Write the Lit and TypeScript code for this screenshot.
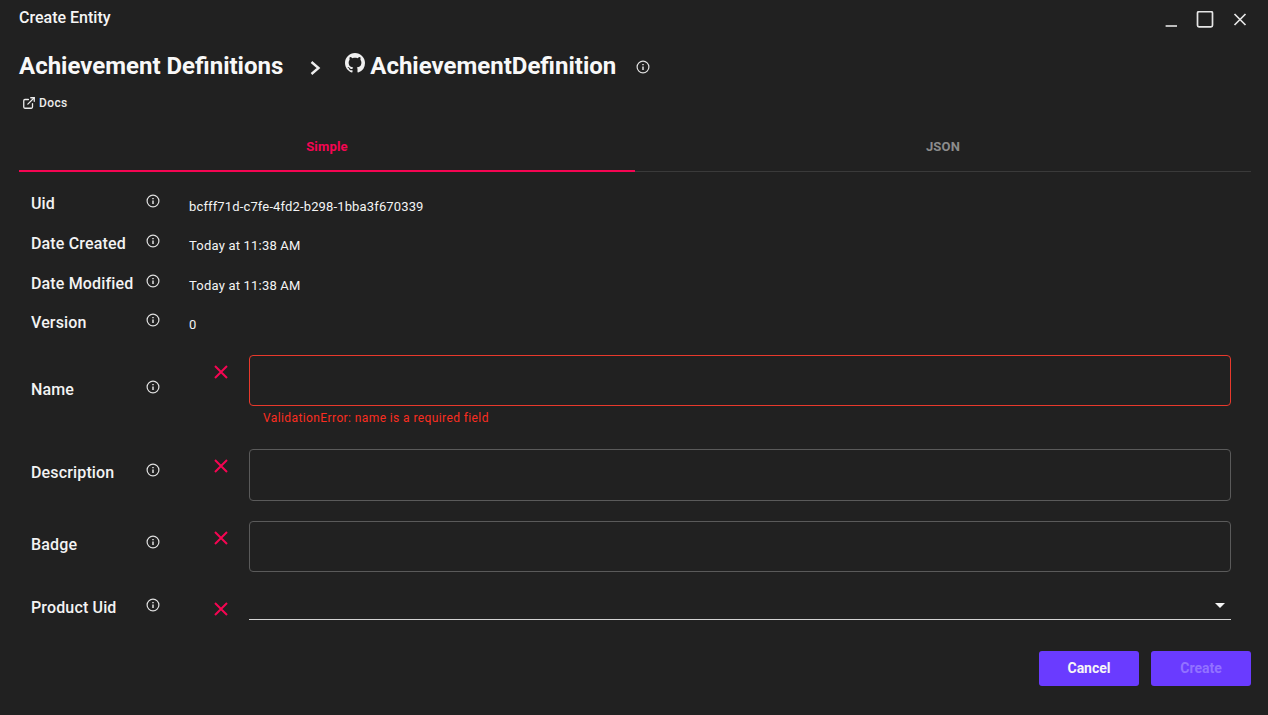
import { LitElement, html, css, svg } from "lit";
import { customElement } from "lit/decorators.js";

const infoIcon = html`<svg class="info" viewBox="0 0 14 14" fill="none" stroke="currentColor" stroke-width="1.2"><circle cx="7" cy="7" r="5.9"/><line x1="7" y1="6.4" x2="7" y2="10" stroke-width="1.5"/><line x1="7" y1="3.9" x2="7" y2="5.2" stroke-width="1.5"/></svg>`;
const crossIcon = html`<svg class="cross" viewBox="0 0 14 14" fill="none" stroke="currentColor" stroke-width="2"><path d="M1 1l12 12M13 1L1 13"/></svg>`;
const ghPath = svg`<path fill-rule="evenodd" d="M8 0C3.58 0 0 3.58 0 8c0 3.54 2.29 6.53 5.47 7.59.4.07.55-.17.55-.38 0-.19-.01-.82-.01-1.49-2.01.37-2.53-.49-2.69-.94-.09-.23-.48-.94-.82-1.13-.28-.15-.68-.52-.01-.53.63-.01 1.08.58 1.23.82.72 1.21 1.87.87 2.33.66.07-.52.28-.87.51-1.07-1.78-.2-3.64-.89-3.64-3.95 0-.87.31-1.59.82-2.15-.08-.2-.36-1.02.08-2.12 0 0 .67-.21 2.2.82.64-.18 1.32-.27 2-.27.68 0 1.36.09 2 .27 1.53-1.04 2.2-.82 2.2-.82.44 1.1.16 1.92.08 2.12.51.56.82 1.27.82 2.15 0 3.07-1.87 3.75-3.65 3.95.29.25.54.73.54 1.48 0 1.07-.01 1.93-.01 2.2 0 .21.15.46.55.38A8.013 8.013 0 0016 8c0-4.42-3.58-8-8-8z"/>`;

@customElement("app-root")
export class AppRoot extends LitElement {
  static styles = css`
    :host { display: block; height: 715px; overflow: hidden; background: #212121; color: #f5f5f5; font-family: Roboto, "Liberation Sans", sans-serif; }
    .page { display: flex; flex-direction: column; height: 715px; padding: 0 17px 0 19px; box-sizing: border-box; }
    .titlebar { display: flex; align-items: flex-start; justify-content: space-between; height: 46px; }
    .title { font-size: 16px; font-weight: 500; line-height: 18px; margin-top: 9px; }
    .winctl { display: flex; align-items: flex-start; color: #e6e6e6; margin-top: 11px; }
    .winctl svg { display: block; }
    .min { width: 14px; height: 16px; margin-right: 19px; }
    .max { width: 18px; height: 17px; margin-right: 19px; }
    .close { width: 14px; height: 14px; margin: 2px 4px 0 0; }
    .heading { display: flex; align-items: center; height: 40px; font-size: 24px; font-weight: 700; line-height: 40px; color: #f8f8f8; }
    .chev { width: 13px; height: 18px; margin: 4px 23px 0 26px; color: #eee; }
    .gh { width: 20px; height: 20px; margin: -6px 5px 0 0; color: #f0f0f0; fill: currentColor; }
    .heading .info { margin: 2px 0 0 20px; }
    .docs { display: flex; align-items: center; height: 16px; margin: 9px 0 0 3px; font-size: 12px; font-weight: 500; color: #ececec; letter-spacing: .4px; }
    .docs svg { width: 14px; height: 14px; margin-right: 3px; }
    .tabs { display: grid; grid-template-columns: 1fr 1fr; height: 52px; margin-top: 9px; border-bottom: 1px solid #3a3a3a; box-sizing: border-box; }
    .tab { display: flex; align-items: center; justify-content: center; font-size: 13px; font-weight: 700; color: #8c8c8c; box-sizing: border-box; height: 52px; letter-spacing: .2px; }
    .tab.active { color: #f50552; border-bottom: 2px solid #f50552; padding-top: 2px; }
    .form { padding: 22px 20px 0 12px; }
    .info { width: 14px; height: 14px; flex: none; color: #e0e0e0; display: block; }
    .label { width: 115px; flex: none; font-size: 16px; font-weight: 500; line-height: 20px; color: #f3f3f3; letter-spacing: .15px; }
    .read { display: flex; align-items: flex-start; height: 40px; }
    .read.short { height: 39px; }
    .value { margin: 2px 0 0 29px; font-size: 13px; line-height: 20px; color: #f4f4f4; letter-spacing: .2px; }
    .read:first-child .value { margin-top: 3px; letter-spacing: .14px; }
    .edit { display: flex; align-items: flex-start; }
    .edit .cross { margin-top: 10px; }
    .cross { width: 14px; height: 14px; flex: none; color: #f50552; margin-left: 54px; margin-right: 21px; }
    .control { flex: 1; min-width: 0; }
    .box { height: 51px; box-sizing: border-box; border: 1px solid #5a5a5a; border-radius: 4px; }
    .box.tall { height: 52px; }
    .box.err { border-color: #e8392c; }
    .error { font-size: 12px; line-height: 14px; color: #fb2d20; margin: 5px 0 0 14px; letter-spacing: .4px; height: 24px; }
    .name { height: 94px; margin-top: 2px; }
    .name .label { margin-top: 25px; } .name .info { margin-top: 25px; }
    .desc { height: 72px; }
    .desc .label { margin-top: 14px; } .desc .info { margin-top: 14px; }
    .badge { height: 68px; }
    .badge .label { margin-top: 14px; } .badge .info { margin-top: 14px; }
    .prod { height: 51px; }
    .prod .label { margin-top: 9px; } .prod .info { margin-top: 9px; }
    .edit.prod .cross { margin-top: 13px; }
    .select { height: 31px; border-bottom: 1px solid #d5d5d5; display: flex; justify-content: flex-end; box-sizing: border-box; }
    .caret { width: 0; height: 0; border-left: 5px solid transparent; border-right: 5px solid transparent; border-top: 5px solid #f5f5f5; margin: 14px 6px 0 0; }
    .footer { display: flex; justify-content: flex-end; gap: 12px; margin-top: 11px; }
    .btn { width: 100px; height: 35px; border: 0; border-radius: 3px; background: #6a3bff; color: #f6f6f6; font: 700 14px Roboto, "Liberation Sans", sans-serif; padding: 0 0 2px; }
    .btn.off { color: #9272ff; }
  `;

  private readRow(label: string, value: string, short = false) {
    return html`<div class="read ${short ? "short" : ""}"><div class="label">${label}</div>${infoIcon}<div class="value">${value}</div></div>`;
  }

  render() {
    return html`<div class="page">
      <div class="titlebar">
        <div class="title">Create Entity</div>
        <div class="winctl">
          <svg class="min" viewBox="0 0 14 16" fill="none" stroke="currentColor" stroke-width="1.6"><path d="M2.6 15H14"/></svg>
          <svg class="max" viewBox="0 0 18 17" fill="none" stroke="currentColor" stroke-width="1.7"><rect x="1.5" y=".6" width="15" height="15.2" rx="1.5"/></svg>
          <svg class="close" viewBox="0 0 14 14" fill="none" stroke="currentColor" stroke-width="1.7"><path d="M1.5 1l11 11M12.5 1l-11 11"/></svg>
        </div>
      </div>
      <div class="heading">
        <span>Achievement Definitions</span>
        <svg class="chev" viewBox="0 0 13 18" fill="none" stroke="currentColor" stroke-width="2.4"><path d="M2.5 3l7 6-7 6"/></svg>
        <svg class="gh" viewBox="0 0 16 16">${ghPath}</svg>
        <span>AchievementDefinition</span>
        ${infoIcon}
      </div>
      <div class="docs">
        <svg viewBox="0 0 24 24" fill="none" stroke="currentColor" stroke-width="2.2" stroke-linecap="round" stroke-linejoin="round"><path d="M18 13v6a2 2 0 0 1-2 2H5a2 2 0 0 1-2-2V8a2 2 0 0 1 2-2h6"/><path d="M15 3h6v6"/><path d="M10 14L21 3"/></svg>
        Docs
      </div>
      <div class="tabs"><div class="tab active">Simple</div><div class="tab">JSON</div></div>
      <div class="form">
        ${this.readRow("Uid", "bcfff71d-c7fe-4fd2-b298-1bba3f670339")}
        ${this.readRow("Date Created", "Today at 11:38 AM")}
        ${this.readRow("Date Modified", "Today at 11:38 AM", true)}
        ${this.readRow("Version", "0")}
        <div class="edit name"><div class="label">Name</div>${infoIcon}${crossIcon}
          <div class="control"><div class="box err"></div><div class="error">ValidationError: name is a required field</div></div></div>
        <div class="edit desc"><div class="label">Description</div>${infoIcon}${crossIcon}<div class="control"><div class="box tall"></div></div></div>
        <div class="edit badge"><div class="label">Badge</div>${infoIcon}${crossIcon}<div class="control"><div class="box"></div></div></div>
        <div class="edit prod"><div class="label">Product Uid</div>${infoIcon}${crossIcon}<div class="control"><div class="select"><div class="caret"></div></div></div></div>
      </div>
      <div class="footer"><button class="btn">Cancel</button><button class="btn off">Create</button></div>
    </div>`;
  }
}
